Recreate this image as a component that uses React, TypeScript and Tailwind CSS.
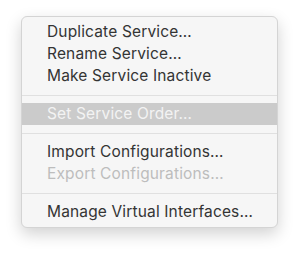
import React from "react";

type Item = { label: string; disabled?: boolean; active?: boolean } | "sep";

const items: Item[] = [
  { label: "Duplicate Service…" },
  { label: "Rename Service…" },
  { label: "Make Service Inactive" },
  "sep",
  { label: "Set Service Order…", active: true },
  "sep",
  { label: "Import Configurations…" },
  { label: "Export Configurations…", disabled: true },
  "sep",
  { label: "Manage Virtual Interfaces…" },
];

export default function App() {
  return (
    <div className="w-[300px] h-[254px] bg-white pt-[16px] pl-[21px]" style={{ fontFamily: "Inter, 'Noto Sans', sans-serif" }}>
      <div className="w-[257px] h-[212px] rounded-[6px] bg-[#f6f6f6] border border-[#d4d4d4] py-[4px] shadow-[0_6px_16px_rgba(0,0,0,0.18)] overflow-hidden">
        {items.map((it, i) =>
          it === "sep" ? (
            <div key={i} className="h-[16px] flex items-center">
              <div className="w-full h-px bg-[#e0e0e0]" />
            </div>
          ) : (
            <div
              key={i}
              className={
                "h-[22px] flex items-center pl-[25px] text-[15.5px] leading-none tracking-[0.15px] " +
                (it.active
                  ? "bg-[#cbcbcb] text-[#f3f3f3]"
                  : it.disabled
                  ? "text-[#bdbdbd]"
                  : "text-[#343434]")
              }
            >
              {it.label}
            </div>
          )
        )}
      </div>
    </div>
  );
}
